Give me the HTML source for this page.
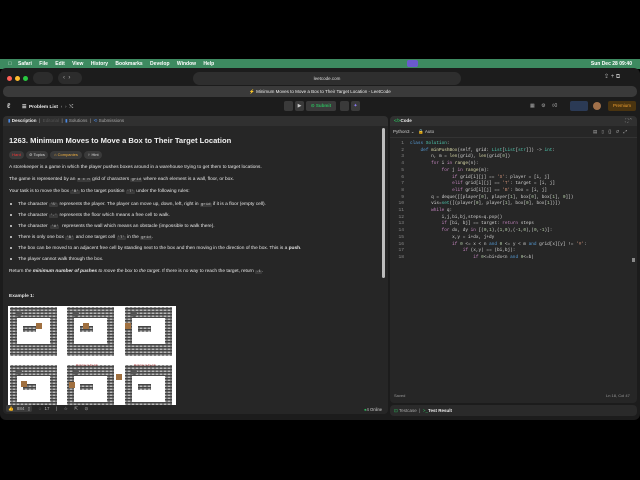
<!DOCTYPE html>
<html><head><meta charset="utf-8"><style>
*{margin:0;padding:0;box-sizing:border-box}
body{width:640px;height:480px;background:#000;font-family:"Liberation Sans",sans-serif;color:#ddd;position:relative;overflow:hidden}
.a{position:absolute;white-space:nowrap}
.menu{left:0;top:59px;width:640px;height:10px;background:#3d8a60;font-size:5px;color:#fff;font-weight:bold}
.win{left:0;top:68px;width:640px;height:352px;background:#1c1c1c;border-radius:6px}
.p{background:#262626;border-radius:4px}
.ph{background:#303030;border-radius:4px 4px 0 0}
.t{font-size:4.8px;color:#e6e6e6}
code{font-family:"Liberation Mono",monospace;background:#3a3a3a;color:#ccc;font-size:4px;padding:0 1px;border-radius:1px}
.li{font-size:4.8px;color:#e6e6e6}
.dot{display:inline-block;width:2px;height:2px;background:#ddd;border-radius:50%;margin-right:6px;vertical-align:middle}
.cd{font-family:"Liberation Mono",monospace;font-size:4.4px;color:#d4d4d4;line-height:6.7px;white-space:pre}
.k{color:#c586c0}.f{color:#dcdcaa}.s{color:#ce9178}.n{color:#b5cea8}.b{color:#569cd6}.c{color:#4ec9b0}
.ln{font-family:"Liberation Mono",monospace;font-size:4.6px;color:#888;line-height:6.7px;text-align:right;width:12px}
</style></head><body>
<div class="a menu"><span style="position:absolute;left:8px;top:2px">&#63743;</span><span style="position:absolute;left:18px;top:2px;word-spacing:6px">Safari File Edit View History Bookmarks Develop Window Help</span><span style="position:absolute;right:8px;top:2px">Sun Dec 28 09:40</span>
<span style="position:absolute;left:407px;top:1px;width:11px;height:7px;background:#6a5acd;border-radius:2px"></span></div>
<div class="a win"></div>
<div class="a" style="left:7px;top:76px;width:5px;height:5px;border-radius:50%;background:#fe5f57"></div>
<div class="a" style="left:15px;top:76px;width:5px;height:5px;border-radius:50%;background:#febc2e"></div>
<div class="a" style="left:23px;top:76px;width:5px;height:5px;border-radius:50%;background:#28c840"></div>
<div class="a" style="left:33px;top:72px;width:20px;height:12px;border-radius:6px;background:#2c2c2c"></div>
<div class="a" style="left:58px;top:72px;width:24px;height:12px;border-radius:6px;background:#2c2c2c;color:#aaa;font-size:6px;padding-left:5px;line-height:12px">‹ &nbsp;›</div>
<div class="a" style="left:193px;top:72px;width:268px;height:13px;border-radius:7px;background:#2e2e2e;font-size:4.5px;color:#ddd;text-align:center;line-height:13px">leetcode.com</div>
<div class="a" style="left:604px;top:73px;font-size:6px;color:#bbb">⇪ + ⧉</div>
<div class="a" style="left:3px;top:86px;width:634px;height:11px;border-radius:5px;background:#3a3a3a;font-size:4.5px;color:#eee;text-align:center;line-height:11px">⚡ Minimum Moves to Move a Box to Their Target Location - LeetCode</div>
<div class="a" style="left:7px;top:103px;font-size:7px;color:#ccc;font-weight:bold">ℓ</div>
<div class="a" style="left:22px;top:104px;font-size:4.8px;color:#eee;font-weight:bold">☰ &nbsp;Problem List &nbsp;<span style="color:#aaa;font-weight:normal">‹ &nbsp;› &nbsp;⤭</span></div>
<div class="a" style="left:284px;top:101px;width:9px;height:10px;background:#3a3a3a;border-radius:2px"></div>
<div class="a" style="left:295px;top:101px;width:9px;height:10px;background:#3a3a3a;border-radius:2px;color:#ccc;font-size:5px;text-align:center;line-height:10px">▶</div>
<div class="a" style="left:306px;top:101px;width:30px;height:10px;background:#3a3a3a;border-radius:2px;color:#2cbb5d;font-size:4.5px;text-align:center;line-height:10px;font-weight:bold">⊙ Submit</div>
<div class="a" style="left:340px;top:101px;width:9px;height:10px;background:#3a3a3a;border-radius:2px"></div>
<div class="a" style="left:351px;top:101px;width:9px;height:10px;background:#3a3a3a;border-radius:2px;color:#8b7cf6;font-size:5px;text-align:center;line-height:10px">✦</div>
<div class="a" style="left:530px;top:103px;font-size:5px;color:#aaa;word-spacing:5px">▦ ⚙ ◊0</div>
<div class="a" style="left:570px;top:101px;width:18px;height:10px;background:#2b3a55;border-radius:2px"></div>
<div class="a" style="left:593px;top:102px;width:8px;height:8px;background:#a0704a;border-radius:50%"></div>
<div class="a" style="left:608px;top:101px;width:28px;height:10px;background:#4a3410;border-radius:2px;color:#f0a030;font-size:4.5px;text-align:center;line-height:10px">Premium</div>
<div class="a p" style="left:3px;top:116px;width:385px;height:298px"></div>
<div class="a ph" style="left:3px;top:116px;width:385px;height:10px;font-size:4.5px;line-height:10px;padding-left:5px;color:#aaa"><span style="color:#4a8ae6">▮</span> <b style="color:#eee">Description</b> &nbsp;|&nbsp; <span style="color:#555">Editorial</span> &nbsp;|&nbsp; <span style="color:#4a8ae6">▮</span> Solutions &nbsp;|&nbsp; <span style="color:#4a8ae6">⟲</span> Submissions</div>
<div class="a" style="left:382px;top:128px;width:3px;height:150px;background:#bbb;border-radius:2px"></div>
<div class="a" style="left:9px;top:136px;font-size:7.6px;font-weight:bold;color:#f0f0f0">1263. Minimum Moves to Move a Box to Their Target Location</div>
<div class="a" style="left:9px;top:151px;width:15px;height:8px;border-radius:4px;background:#3a3a3a;color:#f63737;font-size:4px;line-height:8px;text-align:center">Hard</div>
<div class="a" style="left:26px;top:151px;width:22px;height:8px;border-radius:4px;background:#3a3a3a;color:#ddd;font-size:4px;line-height:8px;text-align:center">⊘ Topics</div>
<div class="a" style="left:50px;top:151px;width:32px;height:8px;border-radius:4px;background:#3a3a3a;color:#f0b040;font-size:4px;line-height:8px;text-align:center">⌂ Companies</div>
<div class="a" style="left:84px;top:151px;width:18px;height:8px;border-radius:4px;background:#3a3a3a;color:#ddd;font-size:4px;line-height:8px;text-align:center">♀ Hint</div>
<div class="a t" style="left:9px;top:165px">A storekeeper is a game in which the player pushes boxes around in a warehouse trying to get them to target locations.</div>
<div class="a t" style="left:9px;top:177px">The game is represented by an <code>m x n</code> grid of characters <code>grid</code> where each element is a wall, floor, or box.</div>
<div class="a t" style="left:9px;top:189px">Your task is to move the box <code>'B'</code> to the target position <code>'T'</code> under the following rules:</div>
<div class="a li" style="left:10px;top:202px"><span class="dot"></span>The character <code>'S'</code> represents the player. The player can move up, down, left, right in <code>grid</code> if it is a floor (empty cell).</div>
<div class="a li" style="left:10px;top:213px"><span class="dot"></span>The character <code>'.'</code> represents the floor which means a free cell to walk.</div>
<div class="a li" style="left:10px;top:224px"><span class="dot"></span>The character&nbsp; <code>'#'</code>&nbsp; represents the wall which means an obstacle (impossible to walk there).</div>
<div class="a li" style="left:10px;top:235px"><span class="dot"></span>There is only one box <code>'B'</code> and one target cell <code>'T'</code> in the <code>grid</code>.</div>
<div class="a li" style="left:10px;top:246px"><span class="dot"></span>The box can be moved to an adjacent free cell by standing next to the box and then moving in the direction of the box. This is a <b>push</b>.</div>
<div class="a li" style="left:10px;top:257px"><span class="dot"></span>The player cannot walk through the box.</div>
<div class="a t" style="left:9px;top:269px">Return <i>the</i> <b><i>minimum number of pushes</i></b> <i>to move the box to the target</i>. If there is no way to reach the target, return <code>-1</code>.</div>
<div class="a t" style="left:9px;top:294px;font-weight:bold">Example 1:</div>
<svg class="a" style="left:8px;top:306px" width="168" height="99" viewBox="0 0 168 99">
<defs><pattern id="br" width="4" height="3" patternUnits="userSpaceOnUse"><rect width="4" height="3" fill="#444"/><rect x="0.5" y="0.5" width="3" height="1.5" fill="#bbb"/></pattern></defs>
<rect width="168" height="99" fill="#fff"/>
<g id="c1"><rect x="2" y="1" width="47" height="49" fill="url(#br)"/><rect x="9" y="12" width="33" height="26" fill="#fff"/><rect x="15" y="20" width="13" height="6" fill="url(#br)"/><circle cx="11" cy="8" r="3" fill="#555"/></g>
<use href="#c1" x="57"/><use href="#c1" x="115"/>
<use href="#c1" y="58"/><use href="#c1" x="57" y="58"/><use href="#c1" x="115" y="58"/>
<rect x="28" y="17" width="6" height="6" fill="#a07040"/><rect x="75" y="17" width="6" height="6" fill="#a07040"/><rect x="117" y="17" width="6" height="6" fill="#a07040"/>
<rect x="13" y="75" width="6" height="6" fill="#a07040"/><rect x="61" y="76" width="6" height="6" fill="#a07040"/><rect x="108" y="68" width="6" height="6" fill="#a07040"/>
<text x="68" y="60" font-size="2.5" fill="#a33">Push box to the left</text><text x="126" y="60" font-size="2.5" fill="#a33">Push box to the left</text>
</svg>
<div class="a" style="left:6px;top:406px;font-size:4.5px;color:#bbb;word-spacing:2px"><span style="background:#3a3a3a;padding:1px 2px;border-radius:2px">👍 884 ▯</span> &nbsp;◌ 17 &nbsp;| &nbsp;☆ &nbsp;⇱ &nbsp;⊙</div>
<div class="a" style="left:364px;top:407px;font-size:4.2px;color:#ccc"><span style="color:#2cbb5d">●</span>4 Online</div>
<div class="a p" style="left:390px;top:116px;width:247px;height:287px"></div>
<div class="a ph" style="left:390px;top:116px;width:247px;height:10px;font-size:4.5px;line-height:10px;padding-left:4px;color:#eee;font-weight:bold"><span style="color:#2cbb5d">&lt;/&gt;</span>Code<span style="position:absolute;right:5px;color:#aaa;font-weight:normal">⛶ ⌃</span></div>
<div class="a" style="left:393px;top:129px;font-size:4.5px;color:#ccc">Python3 ⌄ &nbsp;&nbsp;🔒 Auto</div>
<div class="a" style="left:593px;top:129px;font-size:4.5px;color:#aaa;word-spacing:3px">▤ ▯ {} ↺ ⤢</div>
<div class="a" style="left:390px;top:137px;width:247px;height:1px;background:#333"></div>
<div class="a ln" style="left:392px;top:141px">1<br>2<br>3<br>4<br>5<br>6<br>7<br>8<br>9<br>10<br>11<br>12<br>13<br>14<br>15<br>16<br>17<br>18</div>
<pre class="a cd" style="left:410px;top:141px"><span class="b">class</span> <span class="c">Solution</span>:
    <span class="b">def</span> <span class="f">minPushBox</span>(self, grid: <span class="c">List</span>[<span class="c">List</span>[<span class="c">str</span>]]) -&gt; <span class="c">int</span>:
        n, m = <span class="f">len</span>(grid), <span class="f">len</span>(grid[<span class="n">0</span>])
        <span class="k">for</span> i <span class="k">in</span> <span class="f">range</span>(n):
            <span class="k">for</span> j <span class="k">in</span> <span class="f">range</span>(m):
                <span class="k">if</span> grid[i][j] == <span class="s">'S'</span>: player = [i, j]
                <span class="k">elif</span> grid[i][j] == <span class="s">'T'</span>: target = [i, j]
                <span class="k">elif</span> grid[i][j] == <span class="s">'B'</span>: box = [i, j]
        q = deque([[player[<span class="n">0</span>], player[<span class="n">1</span>], box[<span class="n">0</span>], box[<span class="n">1</span>], <span class="n">0</span>]])
        vis=<span class="c">set</span>([(player[<span class="n">0</span>], player[<span class="n">1</span>], box[<span class="n">0</span>], box[<span class="n">1</span>])])
        <span class="k">while</span> q:
            i,j,bi,bj,steps=q.pop()
            <span class="k">if</span> [bi, bj] == target: <span class="k">return</span> steps
            <span class="k">for</span> dx, dy <span class="k">in</span> [(<span class="n">0</span>,<span class="n">1</span>),(<span class="n">1</span>,<span class="n">0</span>),(-<span class="n">1</span>,<span class="n">0</span>),(<span class="n">0</span>,-<span class="n">1</span>)]:
                x,y = i+dx, j+dy
                <span class="k">if</span> <span class="n">0</span> &lt;= x &lt; n <span class="b">and</span> <span class="n">0</span> &lt;= y &lt; m <span class="b">and</span> grid[x][y] != <span class="s">'#'</span>:
                    <span class="k">if</span> (x,y) == (bi,bj):
                        <span class="k">if</span> <span class="n">0</span>&lt;=bi+dx&lt;n <span class="b">and</span> <span class="n">0</span>&lt;=b|</pre>
<div class="a" style="left:632px;top:258px;width:3px;height:4px;background:#888"></div>
<div class="a" style="left:394px;top:393px;font-size:4px;color:#999">Saved</div>
<div class="a" style="left:606px;top:393px;font-size:4px;color:#999">Ln 18, Col 47</div>
<div class="a p" style="left:390px;top:405px;width:247px;height:11px;font-size:4.5px;line-height:11px;padding-left:4px;color:#aaa;background:#2a2a2a"><span style="color:#2cbb5d">⊡</span> Testcase &nbsp;| &nbsp;<span style="color:#2cbb5d">&gt;_</span><b style="color:#eee">Test Result</b></div>
</body></html>
